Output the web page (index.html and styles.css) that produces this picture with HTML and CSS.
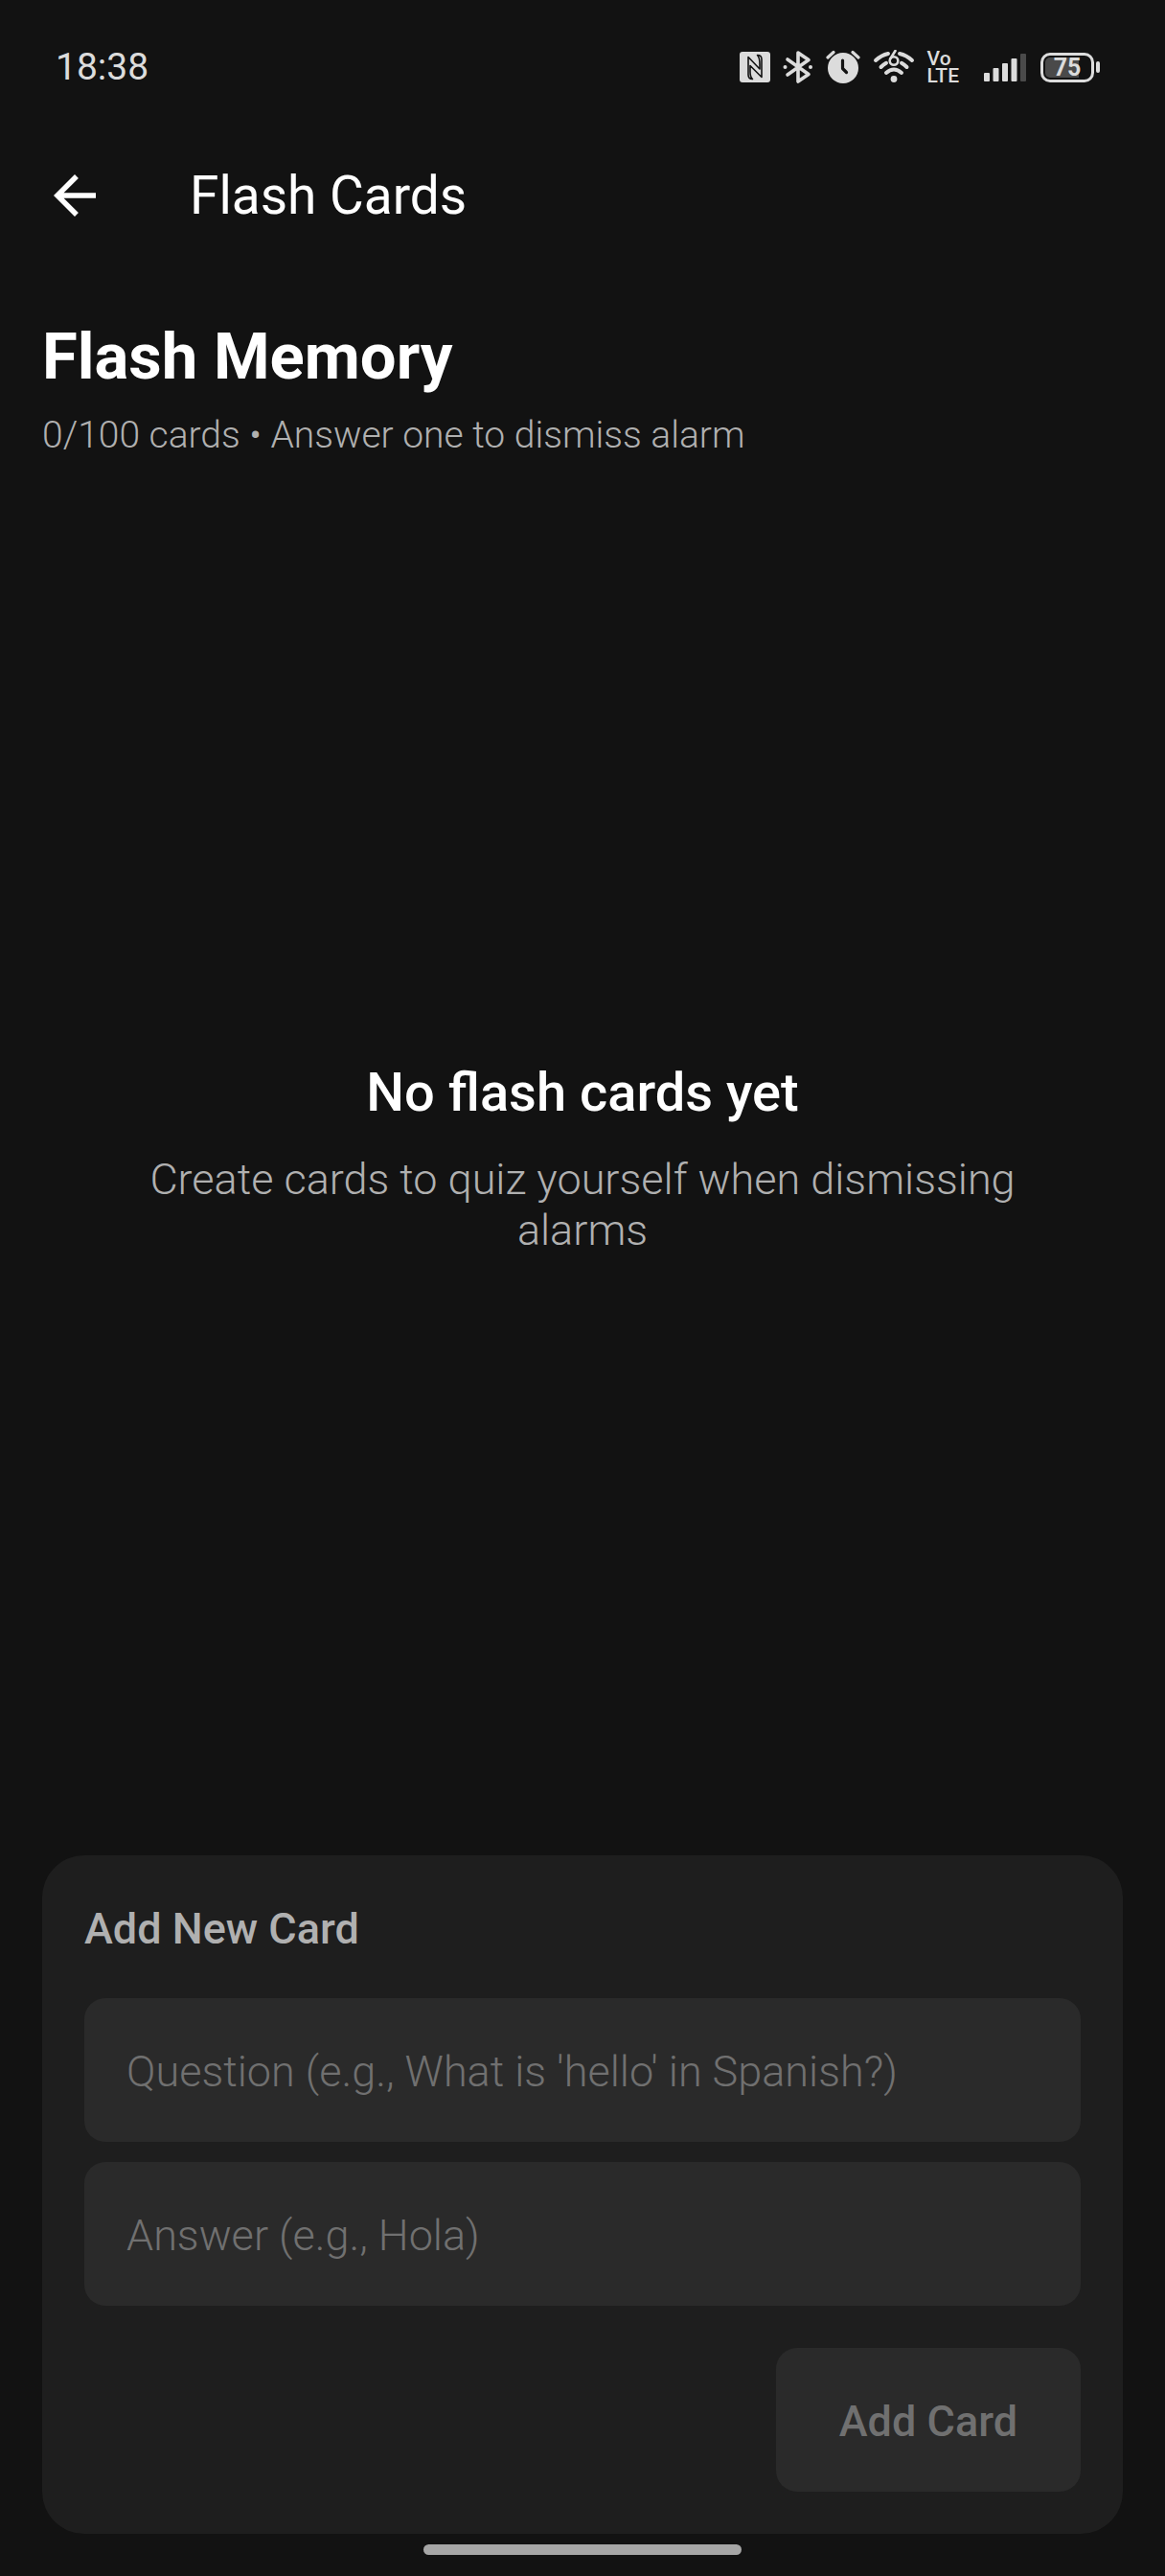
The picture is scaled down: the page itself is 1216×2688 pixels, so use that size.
FILE: index.html
```html
<!DOCTYPE html>
<html lang="en">
<head>
    <meta charset="UTF-8">
    <meta name="viewport" content="width=device-width, initial-scale=1.0">
    <title>Flash Cards</title>
    <link rel="stylesheet" href="styles.css">
</head>
<body>
    <div class="status-bar">
        <span class="clock">18:38</span>
        <div class="status-icons">
            <svg class="nfc" width="32" height="36" viewBox="0 0 32 36" aria-label="NFC">
                <rect y="2" width="32" height="32" rx="3" fill="#dcdcdc"/>
                <path d="M13.500 30.500 Q9 30.500 9 26 V7.500 L21 20 V15 Q21 8 18.500 5.500 Q23 5.500 23 10 V28.500 L11 16.500 V23 Q11 28.500 13.500 30.500Z" fill="#dcdcdc" stroke="#121212" stroke-width="1.600" stroke-linejoin="round"/>
            </svg>
            <svg class="bluetooth" width="32" height="36" viewBox="0 0 32 36" aria-label="Bluetooth">
                <path d="M5 10 L27 25.500 L16 33 V3 L27 10.500 L5 26" fill="none" stroke="#dcdcdc" stroke-width="3.600" stroke-linecap="round" stroke-linejoin="round"/>
                <circle cx="2.500" cy="18" r="2" fill="#dcdcdc"/>
                <circle cx="29" cy="18" r="2" fill="#dcdcdc"/>
            </svg>
            <svg class="alarm" width="36" height="36" viewBox="0 0 36 36" aria-label="Alarm">
                <circle cx="18" cy="19" r="16" fill="#dcdcdc"/>
                <path d="M2 8 L8 2.500 M28 2.500 L34 8" fill="none" stroke="#dcdcdc" stroke-width="3.200" stroke-linecap="round"/>
                <path d="M17.500 11 V19.500 L21.500 23.500" fill="none" stroke="#121212" stroke-width="3.200" stroke-linecap="round" stroke-linejoin="round"/>
            </svg>
            <svg class="wifi" width="44" height="36" viewBox="0 0 44 36" aria-label="Wi-Fi 6">
                <g fill="none" stroke="#dcdcdc" stroke-width="4" stroke-linecap="round">
                    <path d="M3 11 Q9 5.500 16 4 M28 4 Q35 5.500 41 11"/>
                    <path d="M8.500 18 Q11 15.500 14 13.800 M30 13.800 Q33 15.500 35.500 18"/>
                    <path d="M14 24 Q22 17 30 24"/>
                </g>
                <path d="M23.500 1 L18.500 9" fill="none" stroke="#dcdcdc" stroke-width="2.600" stroke-linecap="round"/>
                <circle cx="22" cy="11.500" r="4.300" fill="none" stroke="#dcdcdc" stroke-width="2.600"/>
                <circle cx="22" cy="30.500" r="3.400" fill="#dcdcdc"/>
            </svg>
            <span class="volte">Vo<br>LTE</span>
            <svg class="signal" width="44" height="36" viewBox="0 0 44 36" aria-label="Signal">
                <g fill="#dcdcdc">
                    <rect x="0" y="24" width="6" height="9" rx="1"/>
                    <rect x="9.500" y="19" width="6" height="14" rx="1"/>
                    <rect x="19" y="14" width="6" height="19" rx="1"/>
                    <rect x="28.500" y="9" width="6" height="24" rx="1"/>
                </g>
                <rect x="38" y="4" width="6" height="29" rx="1" fill="#4a4a4a"/>
            </svg>
            <div class="battery"><span class="battery-body">75</span></div>
        </div>
    </div>

    <header class="app-bar">
        <button type="button" class="back-button" aria-label="Back">
            <svg width="66" height="66" viewBox="0 0 24 24">
                <path d="M20 11H7.830l5.590-5.590L12 4l-8 8 8 8 1.410-1.410L7.830 13H20v-2z" fill="#fff"/>
            </svg>
        </button>
        <span class="app-title">Flash Cards</span>
    </header>

    <main class="content">
        <h1>Flash Memory</h1>
        <p class="subtitle">0/100 cards • Answer one to dismiss alarm</p>

        <section class="empty-state">
            <h2>No flash cards yet</h2>
            <p>Create cards to quiz yourself when dismissing alarms</p>
        </section>

        <form class="add-card">
            <h3>Add New Card</h3>
            <div class="fields">
                <input type="text" name="question" aria-label="Question" placeholder="Question (e.g., What is 'hello' in Spanish?)">
                <input type="text" name="answer" aria-label="Answer" placeholder="Answer (e.g., Hola)">
            </div>
            <button type="button" class="add-button" disabled>Add Card</button>
        </form>
    </main>

    <div class="home-indicator"></div>
</body>
</html>
```

FILE: styles.css
```css
* {
    box-sizing: border-box;
}
body {
    display: flex;
    flex-direction: column;
    min-height: 100vh;
    margin: 0;
    background-color: #121212;
    color: #fff;
    font-family: Roboto, "Liberation Sans", sans-serif;
}
h1, h2, h3, p {
    margin: 0;
}
svg {
    display: block;
}

/* status bar */
.status-bar {
    display: flex;
    align-items: center;
    justify-content: space-between;
    height: 140px;
    padding: 0 68px 0 58px;
    color: #dcdcdc;
}
.clock {
    font-size: 39px;
}
.status-icons {
    display: flex;
    align-items: center;
    gap: 13px;
}
.volte {
    font-size: 21px;
    font-weight: 500;
    line-height: 18px;
}
.signal {
    margin: 0 2px 0 13px;
}
.battery {
    display: flex;
    align-items: center;
    gap: 2px;
}
.battery::after {
    content: "";
    width: 4px;
    height: 12px;
    border-radius: 2px;
    background-color: #dcdcdc;
}
.battery-body {
    width: 56px;
    height: 31px;
    border: 3px solid #dcdcdc;
    border-radius: 10px;
    background: linear-gradient(to right, #4a4a4a 75%, transparent 75%) content-box;
    padding: 2px;
    font-size: 25px;
    font-weight: 700;
    line-height: 21px;
    text-align: center;
}

/* app bar */
.app-bar {
    display: flex;
    align-items: center;
    gap: 87px;
    height: 128px;
    padding: 0 45px;
}
.back-button {
    padding: 0;
    border: none;
    background: none;
    cursor: pointer;
}
.app-title {
    font-size: 55px;
}

/* content */
.content {
    display: flex;
    flex: 1;
    flex-direction: column;
    padding: 65px 44px 0;
}
h1 {
    font-size: 67px;
    font-weight: 700;
    line-height: 78px;
}
.subtitle {
    margin-top: 20px;
    color: #b0b0b0;
    font-size: 39px;
    font-weight: 300;
    line-height: 46px;
}
.empty-state {
    display: flex;
    flex: 1;
    flex-direction: column;
    align-items: center;
    justify-content: center;
    gap: 32px;
    padding: 4px 88px 0;
    text-align: center;
}
.empty-state h2 {
    font-size: 56px;
    font-weight: 500;
    line-height: 64px;
}
.empty-state p {
    color: #b0b0b0;
    font-size: 45px;
    font-weight: 300;
    line-height: 53px;
}

/* add card form */
.add-card {
    display: flex;
    flex-direction: column;
    padding: 44px;
    border-radius: 44px;
    background-color: #1e1e1e;
}
.add-card h3 {
    color: #b0b0b0;
    font-size: 45px;
    font-weight: 500;
    line-height: 66px;
}
.fields {
    display: flex;
    flex-direction: column;
    gap: 21px;
    margin: 39px 0 44px;
}
.fields input {
    width: 100%;
    height: 150px;
    padding: 2px 44px 0;
    border: none;
    border-radius: 22px;
    background-color: #2a2a2a;
    color: #fff;
    font-family: inherit;
    font-size: 45px;
    font-weight: 300;
}
.fields input::placeholder {
    color: #707070;
    opacity: 1;
}
.add-button {
    align-self: flex-end;
    height: 150px;
    padding: 2px 66px 0;
    border: none;
    border-radius: 22px;
    background-color: #2a2a2a;
    color: #707070;
    font-family: inherit;
    font-size: 45px;
    font-weight: 500;
}

.home-indicator {
    width: 332px;
    height: 11px;
    margin: 11px auto 22px;
    border-radius: 6px;
    background-color: #a6a6a6;
}
```
